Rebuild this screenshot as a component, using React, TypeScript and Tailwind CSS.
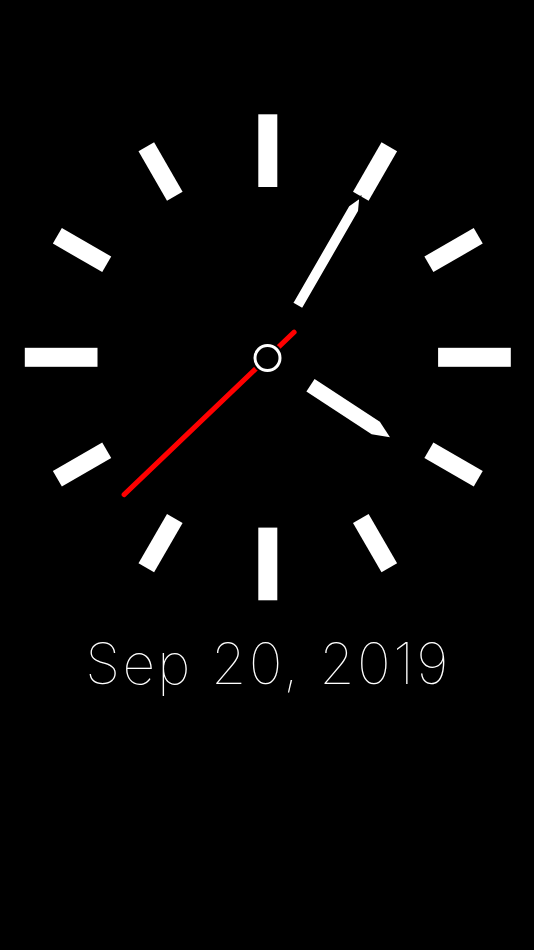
const CX = 267.8
const CY = 357.3

const TICKS = Array.from({ length: 12 }, (_, i) => i * 30)

function Tick({ angle }: { angle: number }) {
  // hour marks at 12/3/6/9 are longer than the others
  const major = angle % 90 === 0
  const inner = major ? 170.3 : 186
  return (
    <rect
      x={major ? -9.5 : -9}
      y={-243}
      width={major ? 19 : 18}
      height={243 - inner}
      fill="#ffffff"
      transform={`rotate(${angle})`}
    />
  )
}

function ClockFace() {
  return (
    <svg width="534" height="610" viewBox="0 0 534 610" className="block">
      <g transform={`translate(${CX} ${CY})`}>
        {TICKS.map((a) => (
          <Tick key={a} angle={a} />
        ))}

        {/* hour hand */}
        <polygon
          points="-7.5,-51 7.5,-51 7.5,-129 0,-146 -7.5,-129"
          fill="#ffffff"
          transform="rotate(123.2)"
        />

        {/* minute hand */}
        <polygon
          points="-6,-59 6,-59 6,-172 0,-185 -6,-172"
          fill="#ffffff"
          stroke="#000000"
          strokeWidth={2}
          transform="rotate(30)"
        />

        {/* second hand */}
        <line
          x1={0}
          y1={36.4}
          x2={0}
          y2={-198.8}
          stroke="#ff0000"
          strokeWidth={5}
          strokeLinecap="round"
          transform="rotate(226.3)"
        />

        <circle cx={-0.3} cy={0.7} r={16} fill="#000000" />
        <circle cx={-0.3} cy={0.7} r={12.5} fill="#000000" stroke="#ffffff" strokeWidth={3} />
      </g>
    </svg>
  )
}

export default function App() {
  return (
    <div className="w-[534px] h-[950px] bg-black overflow-hidden">
      <ClockFace />
      <div
        className="mt-[14px] pl-[2px] text-center text-white text-[57px] leading-[80px] tracking-[2.3px] font-thin"
        style={{ fontFamily: 'Inter, "Liberation Sans", sans-serif' }}
      >
        Sep 20, 2019
      </div>
    </div>
  )
}
